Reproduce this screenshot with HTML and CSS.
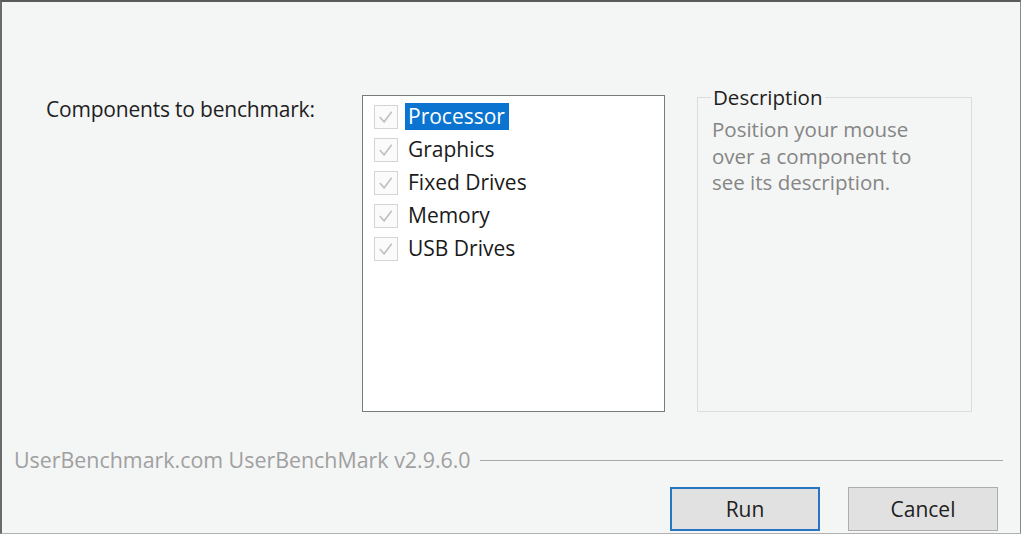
FILE: index.html
```html
<!DOCTYPE html>
<html lang="en">
<head>
  <meta charset="UTF-8" />
  <title>UserBenchMark</title>
  <link rel="stylesheet" href="styles.css">
</head>
<body>
  <div class="window">
    <div class="main">
      <div class="label">Components to benchmark:</div>

      <div class="listbox">
        <div class="item"><span class="check"><svg viewBox="0 0 23 23"><path d="M5 11.5 L9.5 16.5 L17.5 6" /></svg></span><span class="name selected">Processor</span></div>
        <div class="item"><span class="check"><svg viewBox="0 0 23 23"><path d="M5 11.5 L9.5 16.5 L17.5 6" /></svg></span><span class="name">Graphics</span></div>
        <div class="item"><span class="check"><svg viewBox="0 0 23 23"><path d="M5 11.5 L9.5 16.5 L17.5 6" /></svg></span><span class="name">Fixed Drives</span></div>
        <div class="item"><span class="check"><svg viewBox="0 0 23 23"><path d="M5 11.5 L9.5 16.5 L17.5 6" /></svg></span><span class="name">Memory</span></div>
        <div class="item"><span class="check"><svg viewBox="0 0 23 23"><path d="M5 11.5 L9.5 16.5 L17.5 6" /></svg></span><span class="name">USB Drives</span></div>
      </div>

      <fieldset class="desc">
        <legend>Description</legend>
        <p>Position your mouse over a component to see its description.</p>
      </fieldset>
    </div>

    <div class="footer">
      <span class="version">UserBenchmark.com UserBenchMark v2.9.6.0</span>
      <span class="rule"></span>
    </div>

    <div class="buttons">
      <button class="btn default">Run</button>
      <button class="btn">Cancel</button>
    </div>
  </div>
</body>
</html>
```

FILE: styles.css
```css
body {
  margin: 0;
  background: #ffffff;
  font-family: "Open Sans", "Noto Sans", sans-serif;
}
.window {
  width: 1018px;
  height: 531px;
  background: #f4f5f5;
  border-top: 2px solid #5a5a5a;
  border-left: 2px solid #6a6a6a;
  border-right: 1px solid #8a8a8a;
  border-bottom: 1px solid #b0b0b0;
  display: flex;
  flex-direction: column;
}
.main {
  display: flex;
  margin-top: 93px;
  height: 317px;
}
.label {
  width: 316px;
  padding-left: 44px;
  padding-top: 0;
  font-size: 21px;
  letter-spacing: -0.2px;
  color: #1e1e1e;
}
.listbox {
  width: 303px;
  height: 317px;
  box-sizing: border-box;
  background: #ffffff;
  border: 1px solid #7a7a7a;
  padding: 4px 0 0 11px;
}
.item {
  display: flex;
  align-items: center;
  height: 33px;
}
.check {
  width: 22px;
  height: 22px;
  border: 1px solid #d4d4d4;
  background: #fbfbfb;
  display: flex;
}
.check svg {
  width: 22px;
  height: 22px;
  fill: none;
  stroke: #c2c2c2;
  stroke-width: 1.8;
}
.name {
  margin-left: 7px;
  padding: 0 4px 1px 3px;
  font-size: 21px;
  color: #1a1a1a;
  line-height: 26px;
}
.name.selected {
  background: #0a74d0;
  color: #ffffff;
}
.desc {
  margin: -9px 0 0 32px;
  width: 275px;
  height: 326px;
  box-sizing: border-box;
  border: 1px solid #dcdcdc;
  padding: 0 0 0 14px;
}
.desc legend {
  font-size: 20.5px;
  color: #1e1e1e;
  padding: 0 3px 0 2px;
  margin-left: -1px;
  line-height: 22px;
}
.desc p {
  margin: 8px 0 0 0;
  width: 215px;
  font-size: 20.5px;
  line-height: 26.5px;
  color: #858585;
}
.footer {
  display: flex;
  align-items: center;
  margin-top: 34px;
  padding-left: 12px;
  padding-right: 17px;
  height: 26px;
}
.version {
  font-size: 21.4px;
  color: #a0a0a0;
}
.rule {
  flex: 1;
  height: 1px;
  background: #a8a8a8;
  margin-left: 9px;
  margin-top: 2px;
}
.buttons {
  display: flex;
  justify-content: flex-end;
  gap: 28px;
  margin-top: 15px;
  padding-right: 22px;
}
.btn {
  width: 150px;
  height: 44px;
  background: #e1e1e1;
  border: 1px solid #adadad;
  font-family: "Open Sans", "Noto Sans", sans-serif;
  font-size: 21px;
  color: #1e1e1e;
  padding: 0;
}
.btn.default {
  border: 2px solid #2676c4;
}
```
